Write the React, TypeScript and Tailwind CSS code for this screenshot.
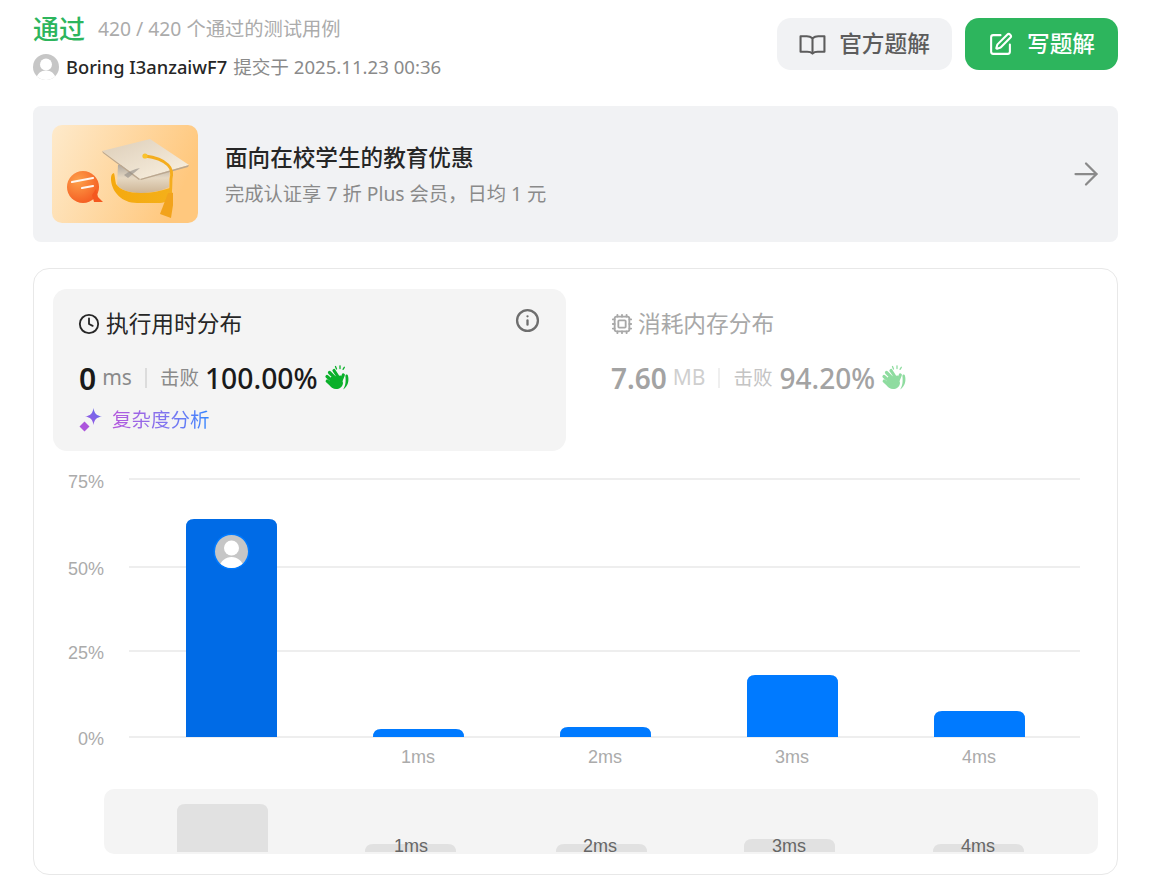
import { ArrowRight, Clock, Cpu, Info, SquarePen } from 'lucide-react';

const bars = [
  { x: 186, top: 519, color: '#006be6' },
  { x: 373, top: 729, color: '#007aff' },
  { x: 560, top: 727, color: '#007aff' },
  { x: 747, top: 675, color: '#007aff' },
  { x: 934, top: 711, color: '#007aff' },
];

const miniBars = [
  { x: 177, top: 804 },
  { x: 365, top: 844 },
  { x: 556, top: 844 },
  { x: 744, top: 839 },
  { x: 933, top: 844 },
];

function barPath(x: number, top: number, bottom: number, r: number) {
  const h = Math.min(r, bottom - top);
  return `M${x} ${bottom}V${top + h}Q${x} ${top} ${x + h} ${top}H${x + 91 - h}Q${x + 91} ${top} ${x + 91} ${top + h}V${bottom}Z`;
}

function Avatar() {
  return (
    <svg width="26" height="26" viewBox="0 0 26 26" className="shrink-0">
      <defs>
        <clipPath id="avatar-clip">
          <circle cx="13" cy="13" r="13" />
        </clipPath>
      </defs>
      <g clipPath="url(#avatar-clip)">
        <rect width="26" height="26" fill="#c6c6c6" />
        <circle cx="13" cy="10.5" r="6" fill="#fff" />
        <path d="M3 27c0-7 5-10.500 10-10.500S23 20 23 27z" fill="#fff" />
      </g>
    </svg>
  );
}

function BookIcon() {
  return (
    <svg width="27" height="27" viewBox="0 0 26 26" fill="none" stroke="#5c5c5c" strokeWidth="2" strokeLinejoin="round">
      <path d="M13 7c-1.500-1.300-3.200-2-5.500-2h-6v15H8c2.300 0 3.800.5 5 1.700 1.200-1.200 2.700-1.700 5-1.700h6.500V5h-6c-2.300 0-4 .7-5.500 2z" />
      <path d="M13 7v14" />
    </svg>
  );
}

function ClapIcon({ color }: { color: string }) {
  return (
    <svg width="26" height="26" viewBox="0 0 26 26" fill={color} stroke={color} strokeLinecap="round">
      <path d="M7 12l10-1.500 2 7.500c-.5 4-3.500 6-7 6-3 0-5-1.500-7-5z" stroke="none" />
      <g strokeWidth="3.200" fill="none">
        <path d="M3 11.500l7 6" />
        <path d="M5.500 7.500l7 7" />
        <path d="M10 5.500l4.500 7" />
        <path d="M19.300 10l-2 5" />
        <path d="M3.200 16l5.500 5" />
      </g>
      <path d="M22.300 9.500c.8-.3 1.300.2 1.600 1 1.300 4 .6 11-4.900 14 2.500-3.500 3-7.500 2.400-13.500 0-.7.300-1.300.9-1.500z" stroke="none" />
      <g strokeWidth="1.300" fill="none">
        <path d="M11.500 1.500l1 2.500" />
        <path d="M16 .8v2.700" />
        <path d="M20.300 2.300l-1.300 2" />
      </g>
    </svg>
  );
}

function SparkleIcon() {
  return (
    <svg width="24" height="24" viewBox="0 0 24 24">
      <defs>
        <linearGradient id="sparkle" x1="0" y1="1" x2="1" y2="0">
          <stop offset="0" stopColor="#a458e0" />
          <stop offset="1" stopColor="#5a6cf0" />
        </linearGradient>
      </defs>
      <path d="M14.500 0c.9 5.500 3 7.700 8.500 8.500-5.500.8-7.600 3-8.500 8.500-.9-5.500-3-7.700-8.500-8.500C11.500 7.700 13.600 5.500 14.500 0z" fill="url(#sparkle)" />
      <path d="M5.500 13.500l5 5-5 5-5-5z" fill="#ac55dc" />
    </svg>
  );
}

function BannerArt() {
  return (
    <svg width="146" height="98" viewBox="0 0 146 98" className="rounded-[10px] shrink-0">
      <defs>
        <linearGradient id="art-bg" x1="0" y1="0" x2="1" y2="0.3">
          <stop offset="0" stopColor="#feeacb" />
          <stop offset="1" stopColor="#ffc87e" />
        </linearGradient>
        <radialGradient id="art-bubble" cx="0.35" cy="0.3" r="0.8">
          <stop offset="0" stopColor="#fda04a" />
          <stop offset="1" stopColor="#f4581f" />
        </radialGradient>
        <linearGradient id="art-top" x1="0" y1="0" x2="1" y2="1">
          <stop offset="0" stopColor="#dccdb8" />
          <stop offset="1" stopColor="#fbf2e2" />
        </linearGradient>
        <linearGradient id="art-cap" x1="0" y1="0" x2="0" y2="1">
          <stop offset="0" stopColor="#a8a29c" />
          <stop offset="0.5" stopColor="#e6d8c2" />
          <stop offset="1" stopColor="#cdb596" />
        </linearGradient>
        <linearGradient id="art-band" x1="0" y1="0" x2="1" y2="0">
          <stop offset="0" stopColor="#f5a90f" />
          <stop offset="1" stopColor="#f4b01a" />
        </linearGradient>
      </defs>
      <rect width="146" height="98" fill="url(#art-bg)" />
      <circle cx="31" cy="62" r="16" fill="url(#art-bubble)" />
      <path d="M40 70l4-6 2 8 5 5-9 0z" fill="#f4581f" />
      <path d="M20 57l21-4M30 63l11-2" stroke="#fff6ee" strokeWidth="2.200" strokeLinecap="round" />
      <path d="M66 40l-1 20c5 6 14 8 23 8 11 0 21-2 29-6l1-24z" fill="url(#art-cap)" />
      <path d="M62 48c-3 1-3 4-3 7 1 12 11 23 26 23h23c6 0 10-4 13-9l-3-6c-9 3-19 5-29 5-12 0-21-3-25-9-1-4-1-8-2-11z" fill="url(#art-band)" />
      <path d="M50 26L98 14l39 26-49 14z" fill="url(#art-top)" />
      <path d="M88 54l49-14-1 2-47 13zM88 54L50 26l1 2 36 27z" fill="#bba78f" />
      <path d="M72 50c6-4 10-6 16-7l-12 10z" fill="#8f8a85" opacity="0.6" />
      <path d="M93 31c9 1 18 4 23 9 4 4 4 10 3 14 0 6 0 11-1 16" fill="none" stroke="#f4ad1e" strokeWidth="2.800" strokeLinecap="round" />
      <circle cx="93" cy="31" r="2.600" fill="#f9c22c" />
      <path d="M116 68h5l0 12-2 13-11-4z" fill="#f2a31c" />
    </svg>
  );
}

export default function App() {
  return (
    <div className="w-[1150px] h-[893px] overflow-hidden bg-white pl-[33px] pr-[32px] pt-[12px] font-['Noto_Sans','Noto_Sans_CJK_SC',sans-serif]">
      {/* Header */}
      <div className="flex justify-between items-start h-[94px]">
        <div>
          <div className="flex items-center h-[34px]">
            <span className="text-[26px] leading-[34px] font-medium text-[#2db55d]">通过</span>
            <span className="ml-[13px] text-[19.300px] text-[#ababab]">420 / 420 个通过的测试用例</span>
          </div>
          <div className="flex items-center mt-[8px] h-[26px]">
            <Avatar />
            <span className="ml-[7px] text-[18.300px] font-medium text-[#262626]">Boring I3anzaiwF7</span>
            <span className="ml-[6px] text-[18.600px] text-[#8a8a8a]">提交于 2025.11.23 00:36</span>
          </div>
        </div>
        <div className="flex gap-[13px] mt-[6px]">
          <button className="w-[175px] h-[52px] rounded-[14px] bg-[#f1f2f4] flex items-center justify-center gap-[13px] pt-[1px] text-[22.700px] font-medium text-[#5c5c5c]">
            <BookIcon />
            <span>官方题解</span>
          </button>
          <button className="w-[153px] h-[52px] rounded-[14px] bg-[#2db55d] flex items-center justify-center gap-[14px] pt-[1px] text-[22.700px] font-medium text-white">
            <SquarePen size={25} strokeWidth={2} />
            <span>写题解</span>
          </button>
        </div>
      </div>

      {/* Banner */}
      <div className="h-[136px] rounded-[8px] bg-[#f1f2f4] flex items-center pl-[19px] pr-[14px]">
        <BannerArt />
        <div className="ml-[27px] flex-1">
          <div className="text-[22.600px] leading-[32px] font-medium text-[#262626]">面向在校学生的教育优惠</div>
          <div className="mt-[7px] text-[19.300px] leading-[26px] text-[#8a8a8a]">完成认证享 7 折 Plus 会员，日均 1 元</div>
        </div>
        <ArrowRight size={36} strokeWidth={1.500} className="text-[#8a8a8a]" />
      </div>

      {/* Card */}
      <div className="mt-[26px] h-[607px] rounded-[16px] border border-[#e8e8e8]">
        <div className="flex pt-[20px] pl-[19px]">
          <div className="w-[513px] h-[162px] rounded-[14px] bg-[#f4f4f4] pl-[25px] pr-[26px] pt-[17px]">
            <div className="flex items-start justify-between h-[36px]">
              <div className="flex items-center gap-[6px]">
                <Clock size={22} strokeWidth={2} className="text-[#262626]" />
                <span className="text-[22.700px] leading-[36px] text-[#262626]">执行用时分布</span>
              </div>
              <Info size={25} strokeWidth={2.200} className="text-[#6e6e6e] mt-[2px]" />
            </div>
            <div className="flex items-center mt-[16px] h-[40px]">
              <span className="ml-[1px] text-[30px] font-semibold text-[#1a1a1a]">0</span>
              <span className="ml-[6px] text-[21px] text-[#8a8a8a]">ms</span>
              <span className="mx-[13px] w-[2px] h-[20px] bg-[#dcdcdc]" />
              <span className="text-[19.500px] text-[#8a8a8a]">击败</span>
              <span className="ml-[6px] text-[28.300px] font-medium text-[#1a1a1a]">100.00%</span>
              <span className="ml-[6px]"><ClapIcon color="#0ab02a" /></span>
            </div>
            <div className="flex items-center gap-[9px] mt-[8px] ml-[1px]">
              <SparkleIcon />
              <span className="text-[19.500px] leading-[28px] bg-linear-to-r from-[#b455dc] to-[#2a85ff] bg-clip-text text-transparent">复杂度分析</span>
            </div>
          </div>
          <div className="ml-[45px] pt-[17px]">
            <div className="flex items-center gap-[5px] h-[36px]">
              <Cpu size={22} strokeWidth={2} className="text-[#a8a8a8]" />
              <span className="text-[22.700px] leading-[36px] text-[#a8a8a8]">消耗内存分布</span>
            </div>
            <div className="flex items-center mt-[16px] h-[40px]">
              <span className="text-[28px] font-semibold text-[#a3a3a3]">7.60</span>
              <span className="ml-[6px] text-[21px] text-[#cfcfcf]">MB</span>
              <span className="mx-[13px] w-[2px] h-[20px] bg-[#efefef]" />
              <span className="text-[19.500px] text-[#c4c4c4]">击败</span>
              <span className="ml-[7px] text-[28px] font-medium text-[#a3a3a3]">94.20%</span>
              <span className="ml-[6px]"><ClapIcon color="#8fdca0" /></span>
            </div>
          </div>
        </div>

        {/* Chart */}
        <svg width="1083" height="310" viewBox="34 465 1083 310" className="block mt-[14px] font-['Liberation_Sans',sans-serif]">
          {[479, 567, 651, 737].map((y) => (
            <rect key={y} x="129" y={y - 1} width="951" height="2" fill="#eeeeee" />
          ))}
          {bars.map((b) => (
            <path key={b.x} d={barPath(b.x, b.top, 737, 8)} fill={b.color} />
          ))}
          <circle cx="231.500" cy="551.500" r="18" fill="#007aff" />
          <circle cx="231.500" cy="551.500" r="16.500" fill="#c6c6c6" />
          <clipPath id="bar-avatar">
            <circle cx="231.500" cy="551.500" r="16.500" />
          </clipPath>
          <g clipPath="url(#bar-avatar)">
            <circle cx="231.500" cy="548" r="7.500" fill="#fff" />
            <path d="M219 570c0-8 6-13 12.500-13s12.500 5 12.500 13z" fill="#fff" />
          </g>
          {[
            ['75%', 488],
            ['50%', 575],
            ['25%', 659],
            ['0%', 745],
          ].map(([t, y]) => (
            <text key={t} x="104" y={y} textAnchor="end" fontSize="18" fill="#ababab">
              {t}
            </text>
          ))}
          {[
            ['1ms', 418],
            ['2ms', 605],
            ['3ms', 792],
            ['4ms', 979],
          ].map(([t, x]) => (
            <text key={t} x={x} y="763" textAnchor="middle" fontSize="18" fill="#ababab">
              {t}
            </text>
          ))}
        </svg>

        {/* Range slider preview */}
        <div className="ml-[70px] w-[994px] h-[65px] mt-[14px] rounded-[10px] bg-[#f4f4f4]">
          <svg width="994" height="65" viewBox="104 789 994 65" className="block overflow-visible font-['Liberation_Sans',sans-serif]">
            {miniBars.map((b) => (
              <path key={b.x} d={barPath(b.x, b.top, 852, 8)} fill="#e1e1e1" />
            ))}
            {[
              ['1ms', 411],
              ['2ms', 600],
              ['3ms', 789],
              ['4ms', 978],
            ].map(([t, x]) => (
              <text key={t} x={x} y="852" textAnchor="middle" fontSize="18" fill="#666">
                {t}
              </text>
            ))}
          </svg>
        </div>
      </div>
    </div>
  );
}
